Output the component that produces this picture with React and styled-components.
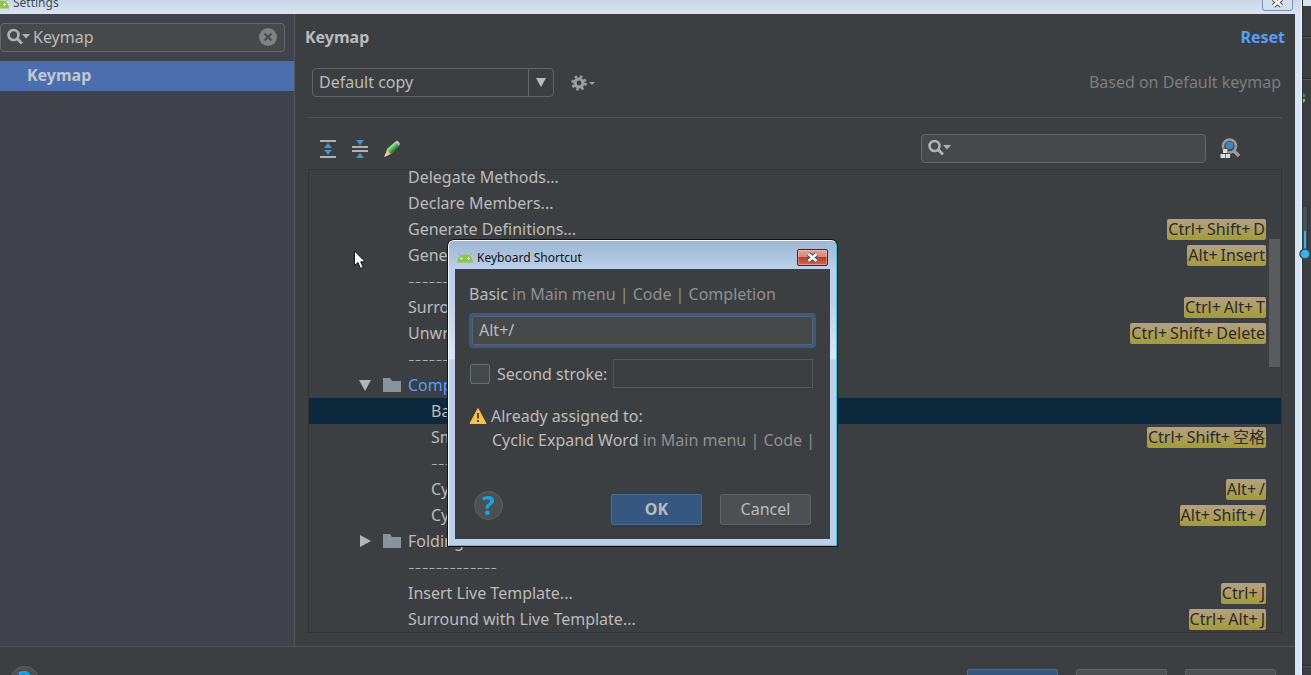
import React from 'react';
import styled, { createGlobalStyle, css } from 'styled-components';

const Global = createGlobalStyle`
  *, *::before, *::after { box-sizing: border-box; }
  body {
    margin: 0;
    background: #3c3f41;
    color: #bbbbbb;
    font: 16px/26px "Noto Sans", "Noto Sans CJK SC", sans-serif;
  }
  button, input, select { font: inherit; color: inherit; }
`;

const Screen = styled.div`
  position: relative;
  display: flex;
  height: 100vh;
  overflow: hidden;
`;

const SettingsWindow = styled.div`
  flex: 1;
  min-width: 0;
  display: flex;
  flex-direction: column;
  background: #d7e4f2;
  border-right: 1px solid #f4f8fc;
`;

const TitleBar = styled.header`
  display: flex;
  align-items: flex-end;
  justify-content: space-between;
  height: 14px;
  flex: none;
  overflow: hidden;
  padding-right: 8px;
  background: linear-gradient(#cad8e5, #d8e4f1);
  color: #444b55;
  font-size: 12px;
  line-height: 20px;
`;

const TitleText = styled.div`
  display: flex;
  align-items: center;
  gap: 4px;
  height: 22px;
  margin-left: -7px;
`;

const GlassClose = styled.button`
  display: grid;
  place-items: center;
  width: 31px;
  height: 20px;
  margin-bottom: 3px;
  padding: 2px 0 0;
  border: 1px solid #8290ad;
  border-radius: 0 0 3px 3px;
  background: #d3dfec;
`;

const Client = styled.div`
  flex: 1;
  min-height: 0;
  display: flex;
  flex-direction: column;
  margin-right: 6px;
  background: #3c3f41;
`;

const Body = styled.div`
  flex: 1;
  min-height: 0;
  display: flex;
`;

const Sidebar = styled.nav`
  width: 295px;
  flex: none;
  padding-top: 9px;
  background: #40434b;
  border-right: 1px solid #555759;
`;

const SearchBox = styled.label`
  display: flex;
  align-items: center;
  gap: 3px;
  width: 285px;
  height: 29px;
  padding: 0 7px 2px 6px;
  background: #45494a;
  border: 1px solid #65686a;
  border-radius: 4px;
  svg { flex: none; }
`;

const SearchInput = styled.input`
  flex: 1;
  min-width: 0;
  padding: 0;
  border: 0;
  outline: 0;
  background: none;
`;

const IconButton = styled.button`
  display: grid;
  place-items: center;
  padding: 0;
  border: 0;
  background: none;
`;

const NavItem = styled.a`
  display: block;
  margin-top: 9px;
  padding: 0 0 2px 27px;
  background: #4b6eaf;
  color: #c3c7ce;
  font-weight: 700;
  line-height: 28px;
  text-decoration: none;
`;

const Pane = styled.main`
  flex: 1;
  min-width: 0;
  display: flex;
  flex-direction: column;
`;

const PaneHeader = styled.div`
  display: flex;
  align-items: center;
  justify-content: space-between;
  height: 46px;
  padding: 0 10px;
`;

const Heading = styled.h1`
  margin: 0;
  font-size: 16px;
  font-weight: 700;
`;

const ResetLink = styled.a`
  color: #589df6;
  font-weight: 700;
  text-decoration: none;
`;

const Section = styled.section`
  flex: 1;
  min-height: 0;
  display: flex;
  flex-direction: column;
  margin: 8px 13px 13px;
`;

const SchemeRow = styled.div`
  display: flex;
  align-items: center;
  gap: 17px;
  height: 50px;
  padding: 0 1px 20px 4px;
  border-bottom: 1px solid #515355;
`;

const Combo = styled.div`
  position: relative;
  width: 242px;
  height: 29px;
`;

const ComboSelect = styled.select`
  appearance: none;
  width: 100%;
  height: 100%;
  padding: 0 30px 2px 6px;
  border: 1px solid #646464;
  border-radius: 4px;
  background: #3c3f41;
`;

const ComboArrow = styled.span`
  position: absolute;
  inset: 1px 1px 1px auto;
  display: grid;
  place-items: center;
  width: 25px;
  border-left: 1px solid #646464;
  pointer-events: none;
`;

const BasedOn = styled.span`
  margin-left: auto;
  padding-bottom: 2px;
  color: #7c7d7d;
`;

const Toolbar = styled.div`
  display: flex;
  align-items: center;
  gap: 14px;
  margin: 16px 0 6px;
  padding: 0 41px 0 11px;
  & > label { margin-left: auto; }
`;

const TreeFrame = styled.div`
  position: relative;
  flex: 1;
  min-height: 0;
  display: flex;
  flex-direction: column;
  justify-content: flex-end;
  overflow: hidden;
  border: 1px solid #323436;
`;

const Tree = styled.ul`
  flex: none;
  margin: 0;
  padding: 0;
  list-style: none;
`;

const TreeRow = styled.li`
  display: flex;
  align-items: center;
  height: 26px;
  padding-right: 15px;
  padding-left: ${(p) => (p.$depth === 'group' ? 50 : p.$depth === 'child' ? 122 : 99)}px;
  white-space: nowrap;
  ${(p) => p.$selected && css`background: #0d293e;`}
`;

const TreeLabel = styled.span`
  color: ${(p) => (p.$changed ? '#589df6' : 'inherit')};
`;

const TreeRule = styled.span`
  font-family: "DejaVu Sans", sans-serif;
  font-size: 19px;
  font-weight: 200;
`;

const GroupIcons = styled.span`
  display: flex;
  align-items: center;
  gap: 12px;
  width: 49px;
`;

const Keys = styled.kbd`
  display: flex;
  gap: 3px;
  margin-left: auto;
  padding: 0 1px;
  border-radius: 2px;
  background: linear-gradient(#b5a082, #a39c37);
  color: #2b2b2b;
  font: inherit;
  line-height: 21px;
`;

const ScrollThumb = styled.div`
  position: absolute;
  top: 69px;
  right: 1px;
  width: 11px;
  height: 128px;
  background: #5a5b5c;
`;

const Footer = styled.footer`
  display: flex;
  gap: 18px;
  flex: none;
  height: 29px;
  overflow: hidden;
  padding: 22px 19px 0 10px;
  border-top: 1px solid #515355;
`;

const HelpButton = styled.button`
  flex: none;
  display: grid;
  place-items: center;
  width: 29px;
  height: 29px;
  margin: -3px auto 0 0;
  padding: 0 0 1px;
  border: 1px solid #5e6163;
  border-radius: 50%;
  background: #4d5052;
  color: #12a5e6;
  font-size: 26px;
  font-weight: 700;
  line-height: 26px;
`;

const PushButton = styled.button`
  flex: none;
  width: 91px;
  height: 31px;
  padding: 0 0 1px;
  border: 1px solid ${(p) => (p.$primary ? '#4a6b8f' : '#5f6264')};
  border-radius: 2px;
  background: ${(p) => (p.$primary ? '#365880' : '#4c5052')};
  font-weight: ${(p) => (p.$primary ? 700 : 400)};
  line-height: 26px;
  box-shadow: 0 3px 0 #37393b;
`;

const Backdrop = styled.aside`
  position: relative;
  width: 9px;
  flex: none;
  background: linear-gradient(#d7e4f2 6px, #3c3f41 6px);
  border-left: 1px solid #2b2d2e;
`;

const BackdropLine = styled.hr`
  position: absolute;
  left: 0;
  right: 0;
  top: ${(p) => p.$top};
  margin: 0;
  border: 0;
  border-top: 1px solid #282a2b;
  border-bottom: 1px solid #55585a;
`;

const Overlay = styled.div`
  position: absolute;
  left: ${(p) => p.$x}px;
  top: ${(p) => p.$y}px;
  line-height: 0;
  pointer-events: none;
`;

const Dialog = styled.div`
  position: absolute;
  left: 448px;
  top: 240px;
  width: 389px;
  padding: 0 6px 6px;
  border: 1px solid;
  border-color: #f2f6fb #33cfe6 #33cfe6 #f2f6fb;
  border-radius: 6px 6px 0 0;
  background: linear-gradient(#9cb6d3, #bbd0ea 28px, #bcd1ea 60px, #dbe6f3 118px, #bbd0ea 119px);
  box-shadow: 0 0 0 1px #111315;
`;

const DialogTitle = styled.div`
  display: flex;
  align-items: center;
  gap: 4px;
  height: 28px;
  padding: 5px 2px 0;
  color: #111111;
  font-size: 12px;
  line-height: 18px;
`;

const RedClose = styled.button`
  display: grid;
  place-items: center;
  width: 31px;
  height: 17px;
  margin-left: auto;
  padding: 0;
  border: 1px solid #571c24;
  border-radius: 2px;
  background: linear-gradient(#e8a194, #d98476 48%, #b93c27 50%, #cf6a55);
  box-shadow: inset 0 0 0 1px rgba(255, 220, 210, 0.4);
`;

const DialogBody = styled.div`
  display: flex;
  flex-direction: column;
  padding: 13px 12px 14px 14px;
  background: #3c3f41;
  line-height: 24px;
`;

const PathLine = styled.div`
  padding-left: ${(p) => (p.$indent ? 23 : 0)}px;
  overflow: hidden;
  white-space: nowrap;
  color: #8f9090;
  b { color: #bbbbbb; font-weight: 400; }
`;

const StrokeInput = styled.input`
  height: 29px;
  margin: 10px 5px 0 3px;
  padding: 0 6px 2px;
  border: 1px solid #55646f;
  outline: 3px solid #3a5a84;
  border-radius: 1px;
  background: #45494a;
`;

const SecondRow = styled.div`
  display: flex;
  align-items: center;
  gap: 7px;
  margin: 14px 5px 16px 1px;
  white-space: nowrap;
`;

const Check = styled.input`
  appearance: none;
  flex: none;
  width: 20px;
  height: 20px;
  margin: 0;
  border: 1px solid #6b6e70;
  border-radius: 2px;
  background: #43494a;
`;

const SecondInput = styled.input`
  width: 200px;
  height: 29px;
  margin-left: auto;
  border: 1px solid #55585a;
  background: #3c3f41;
`;

const SecondLabel = styled.label`
  flex: none;
  width: 109px;
`;

const Warning = styled.div`
  display: flex;
  align-items: center;
  gap: 4px;
`;

const Actions = styled.div`
  display: flex;
  gap: 18px;
  margin-top: 42px;
  padding: 0 7px 0 5px;
`;

const SearchIcon = () => (
  <svg width="23" height="18" viewBox="0 0 23 18" fill="none" aria-hidden="true">
    <circle cx="6.5" cy="7" r="5" stroke="#afb1b3" strokeWidth="2.6" />
    <path d="M10 10.5l5 5" stroke="#afb1b3" strokeWidth="3" />
    <path d="M15 6h8l-4 4.500z" fill="#afb1b3" />
  </svg>
);

const AndroidIcon = () => (
  <svg width="16" height="11" viewBox="0 0 16 11" aria-hidden="true">
    <path d="M0 10.500C.4 5.500 3 2.500 8 2.500s7.600 3 8 8z" fill="#8fc64a" />
    <path d="M1 1l3 3M15 1l-3 3" stroke="#8fc64a" />
    <path d="M4.500 5v3M3 6.500h3M11.500 5v3M10 6.500h3" stroke="#e6f4d4" strokeWidth=".8" />
  </svg>
);

const CrossIcon = () => (
  <svg width="13" height="11" viewBox="0 0 13 11" fill="none" aria-hidden="true">
    <path d="M2.500 2l8 7M10.500 2l-8 7" stroke="#4a4f62" strokeWidth="4.600" />
    <path d="M2.500 2l8 7M10.500 2l-8 7" stroke="#f6f6f8" strokeWidth="2.600" />
  </svg>
);

const ClearIcon = () => (
  <svg width="18" height="18" viewBox="0 0 18 18" aria-hidden="true">
    <circle cx="9" cy="9" r="9" fill="#7f8183" />
    <path d="M5.500 5.500l7 7M12.500 5.500l-7 7" stroke="#45494a" strokeWidth="2" />
  </svg>
);

const GearIcon = () => (
  <svg width="25" height="16" viewBox="0 0 25 16" fill="none" aria-hidden="true">
    <circle cx="8" cy="8" r="6.300" stroke="#9a9c9e" strokeWidth="3" strokeDasharray="2.500 2.450" />
    <circle cx="8" cy="8" r="4" stroke="#9a9c9e" strokeWidth="3.200" />
    <path d="M18 7h6l-3 3z" fill="#9a9c9e" />
  </svg>
);

const ExpandIcon = () => (
  <svg width="18" height="18" viewBox="0 0 18 18" aria-hidden="true">
    <path d="M1 1h16M1 17h16" stroke="#afb1b3" strokeWidth="2" />
    <path d="M5 8l4-5 4 5zM5 10l4 5 4-5z" fill="#4d92c4" />
  </svg>
);

const CollapseIcon = () => (
  <svg width="18" height="18" viewBox="0 0 18 18" aria-hidden="true">
    <path d="M1 7h16M1 11h16" stroke="#afb1b3" strokeWidth="2" />
    <path d="M5 0h8L9 5zM5 18l4-5 4 5z" fill="#4d92c4" />
  </svg>
);

const PencilIcon = () => (
  <svg width="18" height="18" viewBox="0 0 18 18" aria-hidden="true">
    <path d="M4 9L12 2l4 4-8 8z" fill="#4fb154" />
    <path d="M4 9L12 2l1.500 1.500L5.500 11z" fill="#8ade86" />
    <path d="M6.800 12.800L15 5l1 1-8 8z" fill="#2f7f3b" />
    <path d="M12 2l1.500-1.200c.8-.5 3.700 2 3.200 3L16 6z" fill="#c2c3c4" />
    <path d="M4 9l4 5-5 2.200-1-1z" fill="#f0bd7c" />
    <path d="M2.700 13.500L1 17l3.600-1.500z" fill="#dedede" />
  </svg>
);

const FindShortcutIcon = () => (
  <svg width="21" height="21" viewBox="0 0 21 21" fill="none" aria-hidden="true">
    <path d="M13 12l6 6" stroke="#9a9c9e" strokeWidth="3.400" />
    <circle cx="9.500" cy="8" r="6.500" stroke="#9a9c9e" strokeWidth="2.600" fill="#3c3f41" />
    <circle cx="9.500" cy="7.500" r="4" fill="#3f86b5" />
    <path d="M3 10.500h5v5h2v5H0v-5h3z" fill="#3c3f41" />
    <path d="M3 11h4.500v4H3zM.500 16H5v4H.500zM5.600 16h4.500v4H5.600z" fill="#dcdcdc" />
  </svg>
);

const TriangleDown = () => (
  <svg width="12" height="12" viewBox="0 0 12 12" aria-hidden="true">
    <path d="M0 1h12L6 12z" fill="#b4b4b4" />
  </svg>
);

const TriangleRight = () => (
  <svg width="12" height="12" viewBox="0 0 12 12" aria-hidden="true">
    <path d="M1 0l11 6L1 12z" fill="#b4b4b4" />
  </svg>
);

const FolderIcon = () => (
  <svg width="18" height="14" viewBox="0 0 18 14" aria-hidden="true">
    <path d="M0 0h7l2 3h9v11H0z" fill="#87939a" />
  </svg>
);

const WarningIcon = () => (
  <svg width="18" height="18" viewBox="0 0 18 18" aria-hidden="true">
    <path d="M9 1.500L17 16.500H1z" fill="#f7c04a" stroke="#f7c04a" strokeLinejoin="round" />
    <path d="M9 6v5.500M9 13v2" stroke="#5b4d2a" strokeWidth="2" />
  </svg>
);

const RULE = '-------------';

const rows = [
  { label: 'Delegate Methods...' },
  { label: 'Declare Members...' },
  { label: 'Generate Definitions...', keys: ['Ctrl', 'Shift', 'D'] },
  { label: 'Generate...', keys: ['Alt', 'Insert'] },
  { label: RULE },
  { label: 'Surround With...', keys: ['Ctrl', 'Alt', 'T'] },
  { label: 'Unwrap/Remove...', keys: ['Ctrl', 'Shift', 'Delete'] },
  { label: RULE },
  { label: 'Completion', depth: 'group', open: true, changed: true },
  { label: 'Basic', depth: 'child', selected: true },
  { label: 'SmartType', depth: 'child', keys: ['Ctrl', 'Shift', '空格'] },
  { label: RULE, depth: 'child' },
  { label: 'Cyclic Expand Word', depth: 'child', keys: ['Alt', '/'] },
  { label: 'Cyclic Expand Word (Backward)', depth: 'child', keys: ['Alt', 'Shift', '/'] },
  { label: 'Folding', depth: 'group' },
  { label: RULE },
  { label: 'Insert Live Template...', keys: ['Ctrl', 'J'] },
  { label: 'Surround with Live Template...', keys: ['Ctrl', 'Alt', 'J'] },
];

function Shortcut({ keys }) {
  return (
    <Keys>
      {keys.map((key, i) => (
        <span key={key}>{i < keys.length - 1 ? `${key}+` : key}</span>
      ))}
    </Keys>
  );
}

function ActionRow({ row }) {
  return (
    <TreeRow $depth={row.depth} $selected={row.selected}>
      {row.depth === 'group' && (
        <GroupIcons>
          {row.open ? <TriangleDown /> : <TriangleRight />}
          <FolderIcon />
        </GroupIcons>
      )}
      {row.label === RULE
        ? <TreeRule>{RULE}</TreeRule>
        : <TreeLabel $changed={row.changed}>{row.label}</TreeLabel>}
      {row.keys && <Shortcut keys={row.keys} />}
    </TreeRow>
  );
}

function ShortcutDialog() {
  return (
    <Dialog role="dialog" aria-labelledby="shortcut-title">
      <DialogTitle>
        <AndroidIcon />
        <span id="shortcut-title">Keyboard Shortcut</span>
        <RedClose aria-label="Close dialog"><CrossIcon /></RedClose>
      </DialogTitle>
      <DialogBody>
        <PathLine><b>Basic</b> in Main menu | Code | Completion</PathLine>
        <StrokeInput aria-label="First stroke" defaultValue="Alt+/" />
        <SecondRow>
          <Check type="checkbox" id="second" />
          <SecondLabel htmlFor="second">Second stroke:</SecondLabel>
          <SecondInput aria-label="Second stroke keys" disabled />
        </SecondRow>
        <Warning><WarningIcon />Already assigned to:</Warning>
        <PathLine $indent><b>Cyclic Expand Word</b> in Main menu | Code |</PathLine>
        <Actions>
          <HelpButton aria-label="Help">?</HelpButton>
          <PushButton $primary>OK</PushButton>
          <PushButton>Cancel</PushButton>
        </Actions>
      </DialogBody>
    </Dialog>
  );
}

export default function App() {
  return (
    <>
      <Global />
      <Screen>
        <SettingsWindow>
          <TitleBar>
            <TitleText><AndroidIcon />Settings</TitleText>
            <GlassClose aria-label="Close settings"><CrossIcon /></GlassClose>
          </TitleBar>
          <Client>
            <Body>
              <Sidebar>
                <SearchBox>
                  <SearchIcon />
                  <SearchInput aria-label="Search settings" defaultValue="Keymap" />
                  <IconButton aria-label="Clear search"><ClearIcon /></IconButton>
                </SearchBox>
                <NavItem href="#keymap">Keymap</NavItem>
              </Sidebar>
              <Pane>
                <PaneHeader>
                  <Heading>Keymap</Heading>
                  <ResetLink href="#reset">Reset</ResetLink>
                </PaneHeader>
                <Section>
                  <SchemeRow>
                    <Combo>
                      <ComboSelect aria-label="Keymap scheme">
                        <option>Default copy</option>
                      </ComboSelect>
                      <ComboArrow>
                        <svg width="10" height="9" viewBox="0 0 10 9" aria-hidden="true">
                          <path d="M0 0h10L5 9z" fill="#bbbbbb" />
                        </svg>
                      </ComboArrow>
                    </Combo>
                    <IconButton aria-label="Scheme actions"><GearIcon /></IconButton>
                    <BasedOn>Based on Default keymap</BasedOn>
                  </SchemeRow>
                  <Toolbar>
                    <IconButton aria-label="Expand all"><ExpandIcon /></IconButton>
                    <IconButton aria-label="Collapse all"><CollapseIcon /></IconButton>
                    <IconButton aria-label="Edit shortcut"><PencilIcon /></IconButton>
                    <SearchBox>
                      <SearchIcon />
                      <SearchInput aria-label="Search actions" />
                    </SearchBox>
                    <IconButton aria-label="Find by shortcut"><FindShortcutIcon /></IconButton>
                  </Toolbar>
                  <TreeFrame>
                    <Tree>
                      {rows.map((row, i) => <ActionRow key={i} row={row} />)}
                    </Tree>
                    <ScrollThumb />
                  </TreeFrame>
                </Section>
              </Pane>
            </Body>
            <Footer>
              <HelpButton aria-label="Settings help">?</HelpButton>
              <PushButton $primary aria-label="OK" />
              <PushButton aria-label="Cancel" />
              <PushButton aria-label="Apply" />
            </Footer>
          </Client>
        </SettingsWindow>
        <Backdrop>
          <BackdropLine $top="36px" />
          <BackdropLine $top="78px" />
          <BackdropLine $top="calc(100% - 10px)" />
          <Overlay $x={0} $y={93}>
            <svg width="3" height="10" viewBox="0 0 3 10" aria-hidden="true">
              <path d="M0 0l2 2v2H0z" fill="#2fa866" />
              <path d="M0 6h2v2L0 10z" fill="#a9c552" />
            </svg>
          </Overlay>
          <Overlay $x={-5} $y={204}>
            <svg width="14" height="58" viewBox="0 0 14 58" aria-hidden="true">
              <rect x="4.500" y="1.500" width="5" height="48" rx="2.500" fill="#45525c" stroke="#2d3438" />
              <path d="M7 27v20" stroke="#33b5e5" strokeWidth="2" />
              <circle cx="7" cy="50" r="5" fill="#33b5e5" stroke="#3b4850" strokeWidth="1.500" />
            </svg>
          </Overlay>
        </Backdrop>
        <ShortcutDialog />
        <Overlay $x={353} $y={250}>
          <svg width="14" height="20" viewBox="0 0 14 20" aria-hidden="true">
            <path d="M1.500 1v14.500l3.500-3 2.500 6 2.700-1.200-2.500-5.500h4.500z" fill="#ffffff" stroke="#15171c" />
          </svg>
        </Overlay>
      </Screen>
    </>
  );
}
